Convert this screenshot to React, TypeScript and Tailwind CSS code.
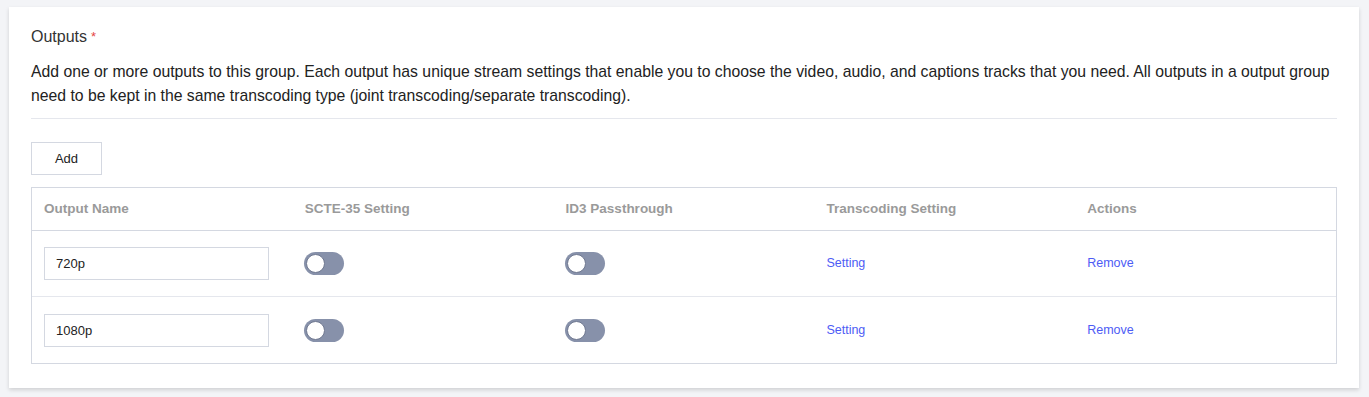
const rows = ["720p", "1080p"];
const headers = ["Output Name", "SCTE-35 Setting", "ID3 Passthrough", "Transcoding Setting", "Actions"];

function Toggle() {
  return (
    <button className="relative w-[40px] h-[23px] rounded-full bg-[#8791aa]">
      <span className="absolute left-[2px] top-[2px] w-[19px] h-[19px] rounded-full bg-white border border-[#6f7890]" />
    </button>
  );
}

export default function App() {
  return (
    <div className="min-h-[397px] bg-[#f3f4f7] pt-[7px] pl-[9px] font-['Liberation_Sans',Arial,sans-serif]">
      <div className="w-[1350px] bg-white shadow-[0_2px_4px_rgba(0,0,0,0.15)] px-[22px] pt-[20px] pb-[24px] text-[#222]">
        {/* Title */}
        <div className="flex items-center h-[20px] text-[16px] leading-[20px] text-[#333]">
          Outputs <span className="ml-1 text-[13px] text-[#e54545]">*</span>
        </div>
        <p className="mt-[13px] text-[15.75px] leading-[24px] text-[#222]">
          Add one or more outputs to this group. Each output has unique stream settings that enable you to choose the video, audio, and captions tracks that you need. All outputs in a output group need to be kept in the same transcoding type (joint transcoding/separate transcoding).
        </p>
        <div className="mt-[10px] border-t border-[#e5e7ed]" />

        <button className="mt-[23px] w-[71px] h-[33px] border border-[#d4d8e1] text-[13px] text-[#222]">
          Add
        </button>

        {/* Table */}
        <div className="mt-[12px] border border-[#d4d8e1]">
          <div className="grid grid-cols-5 h-[43px] items-center border-b border-[#d4d8e1]">
            {headers.map((h) => (
              <div key={h} className="px-[12px] text-[13.5px] font-bold text-[#9a9a9a]">
                {h}
              </div>
            ))}
          </div>
          {rows.map((r, i) => (
            <div
              key={r}
              className={`grid grid-cols-5 h-[66px] items-center ${i < rows.length - 1 ? "border-b border-[#e5e7ed]" : ""}`}
            >
              <div className="px-[12px]">
                <input
                  defaultValue={r}
                  className="w-[225px] h-[33px] border border-[#d4d8e1] pl-[11px] text-[13px] text-[#222] outline-none"
                />
              </div>
              <div className="px-[11px] flex">
                <Toggle />
              </div>
              <div className="px-[11px] flex">
                <Toggle />
              </div>
              <div className="px-[12px] text-[12.5px] text-[#4d5cf5]">Setting</div>
              <div className="px-[12px] text-[12.5px] text-[#4d5cf5]">Remove</div>
            </div>
          ))}
        </div>
      </div>
    </div>
  );
}
